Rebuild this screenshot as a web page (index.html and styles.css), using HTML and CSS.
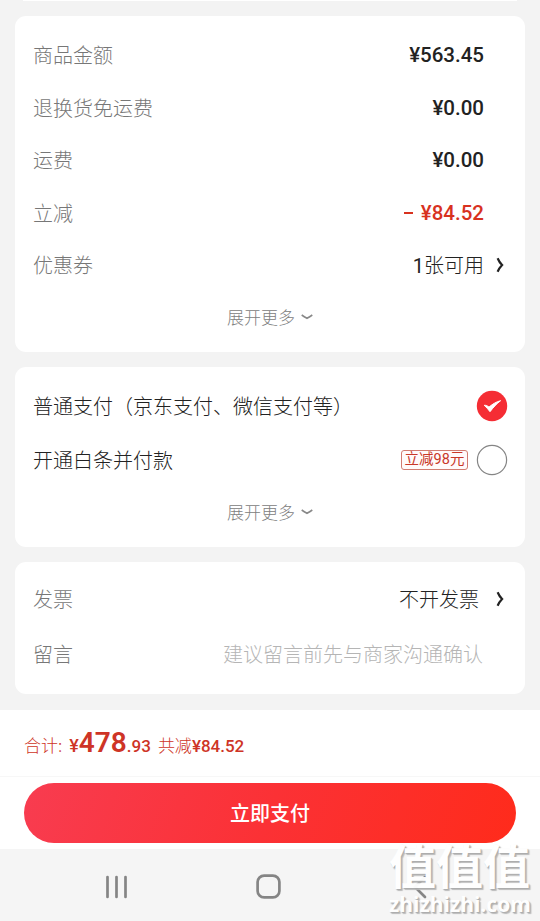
FILE: index.html
```html
<!DOCTYPE html>
<html lang="zh-CN">
<head>
<meta charset="utf-8">
<title>立即支付</title>
<link rel="stylesheet" href="styles.css">
</head>
<body>
<div class="screen">
  <main class="content">
    <div class="card-end"></div>
    <section class="card amounts">
      <div class="row"><span class="label">商品金额</span><span class="price">¥563.45</span></div>
      <div class="row"><span class="label">退换货免运费</span><span class="price">¥0.00</span></div>
      <div class="row"><span class="label">运费</span><span class="price">¥0.00</span></div>
      <div class="row"><span class="label">立减</span><span class="price off"><i class="minus"></i>¥84.52</span></div>
      <div class="row"><span class="label">优惠券</span><span class="value"><span class="one">1</span>张可用</span>
        <svg class="arrow" viewBox="0 0 8 16"><path d="M1.6 1.2Q3.2 5 6.1 8Q3.2 11 1.6 14.8"/></svg></div>
      <div class="more">展开更多<svg class="down" viewBox="0 0 12 6"><path d="M.7 1Q3.2 2.7 6 4.3Q8.8 2.7 11.3 1"/></svg></div>
    </section>
    <section class="card payment">
      <div class="row pay"><span>普通支付（京东支付、微信支付等）</span>
        <svg class="radio" viewBox="0 0 32 32"><circle cx="16" cy="16" r="15.2" fill="#f52d34"/><path d="M8.2 15.3C10 15 11.7 16.1 13 17.1C16.3 14.3 20.2 11.7 24.6 10.7C21 13.3 17.2 17.5 14 21.7C12.2 19.3 10.3 17 8.2 15.3Z" fill="#fff" stroke="#fff" stroke-width="1" stroke-linejoin="round"/></svg></div>
      <div class="row pay"><span>开通白条并付款</span><span class="tag">立减98元</span>
        <svg class="radio" viewBox="0 0 32 32"><circle cx="16" cy="16" r="14.6" fill="#fff" stroke="#858585" stroke-width="1.2"/></svg></div>
      <div class="more">展开更多<svg class="down" viewBox="0 0 12 6"><path d="M.7 1Q3.2 2.7 6 4.3Q8.8 2.7 11.3 1"/></svg></div>
    </section>
    <section class="card extra">
      <div class="row"><span class="label">发票</span><span class="value invoice">不开发票</span>
        <svg class="arrow" viewBox="0 0 8 16"><path d="M1.6 1.2Q3.2 5 6.1 8Q3.2 11 1.6 14.8"/></svg></div>
      <div class="row"><span class="label">留言</span><span class="value hint">建议留言前先与商家沟通确认</span></div>
    </section>
  </main>
  <footer class="checkout">
    <div class="total"><span class="sum">合计:</span><b class="yen">¥</b><b class="big">478</b><b class="cents">.93</b><span class="saved">共减</span><b class="saved-price">¥84.52</b></div>
    <div class="action"><button class="submit">立即支付</button></div>
  </footer>
  <nav class="navbar">
    <svg class="recent" viewBox="0 0 24 24"><path d="M2.5 2V22M11.5 2V22M20.5 2V22"/></svg>
    <svg class="home" viewBox="0 0 26 26"><rect x="1.6" y="1.6" width="21.8" height="21.8" rx="6.5"/></svg>
    <svg class="back" viewBox="0 0 14 24"><path d="M12 2L2 12L12 22"/></svg>
  </nav>
  <div class="watermark"><span class="mark">值值值</span><span class="site">zhizhizhi.com</span></div>
</div>
</body>
</html>
```
FILE: styles.css
```css
* { box-sizing: border-box; }
body { margin: 0; font-family: Roboto, "Noto Sans CJK SC", sans-serif; }
.screen {
  position: relative; width: 540px; height: 921px; overflow: hidden;
  display: flex; flex-direction: column; background: #f3f3f3;
}
.content { height: 710px; padding: 0 15px; }
.card-end { height: 1px; margin: 0 8px 15px; background: #fff; }
.card {
  background: #fff; border-radius: 11px; margin-bottom: 15px; padding: 0 18px;
  font-size: 20px; color: #222; font-weight: 300; font-family: "Noto Sans CJK SC", sans-serif;
}
.row { display: flex; align-items: center; height: 52.5px; line-height: 30px; white-space: nowrap; }
.label { color: #777; }
.amounts { height: 335.5px; padding-top: 13px; }
.price { margin-left: auto; margin-right: 23px; font: 500 20.5px/30px Roboto, sans-serif; }
.off { display: flex; align-items: center; color: #d8321f; }
.minus { width: 9px; height: 2px; margin-right: 8px; background: #d8321f; }
.value { margin-left: auto; margin-right: 12px; }
.one { font-family: Roboto, sans-serif; font-weight: 400; }
.arrow { width: 8px; height: 16px; margin-right: 3px; fill: none; stroke: #222; stroke-width: 2.2; }
.more {
  display: flex; align-items: center; justify-content: center; height: 50px;
  font-size: 17px; color: #808080;
}
.down { width: 12px; height: 6px; margin-left: 6px; fill: none; stroke: #888; stroke-width: 1.6; }
.payment { height: 180.5px; padding-top: 12px; }
.payment .row { height: 54px; }
.radio { width: 32px; height: 32px; margin-left: auto; margin-right: -1px; }
.tag {
  margin-left: auto; margin-right: 8px; width: 67px; height: 20px; border: 1px solid #d17c71;
  border-radius: 3px; color: #c93829; background: #fffafa; text-align: center;
  font: 400 14.5px/18px Roboto, "Noto Sans CJK SC", sans-serif;
}
.tag + .radio { margin-left: 0; }
.extra { height: 132px; padding-top: 9px; margin: 0; }
.extra .row { height: 55px; }
.invoice { margin-right: 17px; }
.hint { margin-right: 24px; color: #b5b5b5; }
.checkout { height: 139px; background: #fff; color: #ce3426; }
.total {
  display: flex; align-items: baseline; height: 67px; padding: 12px 24px 0;
  border-bottom: 1px solid #f7f7f7; line-height: 42px; white-space: nowrap;
}
.total b { font-family: Roboto, sans-serif; font-weight: 500; }
.sum, .saved { font: 300 17px/42px "Noto Sans CJK SC", sans-serif; }
.total .yen { margin-left: 7px; font-size: 18px; }
.total .big { font-size: 28px; font-weight: 600; }
.total .cents, .total .saved-price { font-size: 17px; }
.saved { margin-left: 7px; }
.action { padding: 6px 24px 0; }
.submit {
  display: block; width: 100%; height: 60px; padding: 0; border: 0; border-radius: 30px;
  background: linear-gradient(110deg, #f83c50, #fb3135 50%, #ff2b1b); color: #fff;
  font: 500 20px/60px "Noto Sans CJK SC", sans-serif;
}
.navbar {
  display: flex; align-items: center; height: 72px; padding: 4px 112px 0 105px;
  background: #f5f5f5; fill: none; stroke: #858585;
}
.navbar svg { fill: none; stroke: #858585; stroke-width: 2.7; stroke-linecap: round; }
.recent { width: 24px; height: 24px; }
.home { width: 26px; height: 26px; margin-left: 127px; }
.back { width: 14px; height: 24px; margin-left: 131px; flex: none; }
.watermark {
  position: absolute; left: 389px; top: 836px; width: 146px; display: flex; flex-direction: column;
  color: #fff; text-shadow: 1px 1px 1px #aaa, 2px 2px 1px #bbb; opacity: .96; white-space: nowrap;
}
.mark { font: 700 47px/56px "Noto Sans CJK SC", sans-serif; }
.site { font: 700 21px/24px "Open Sans", sans-serif; }
```
